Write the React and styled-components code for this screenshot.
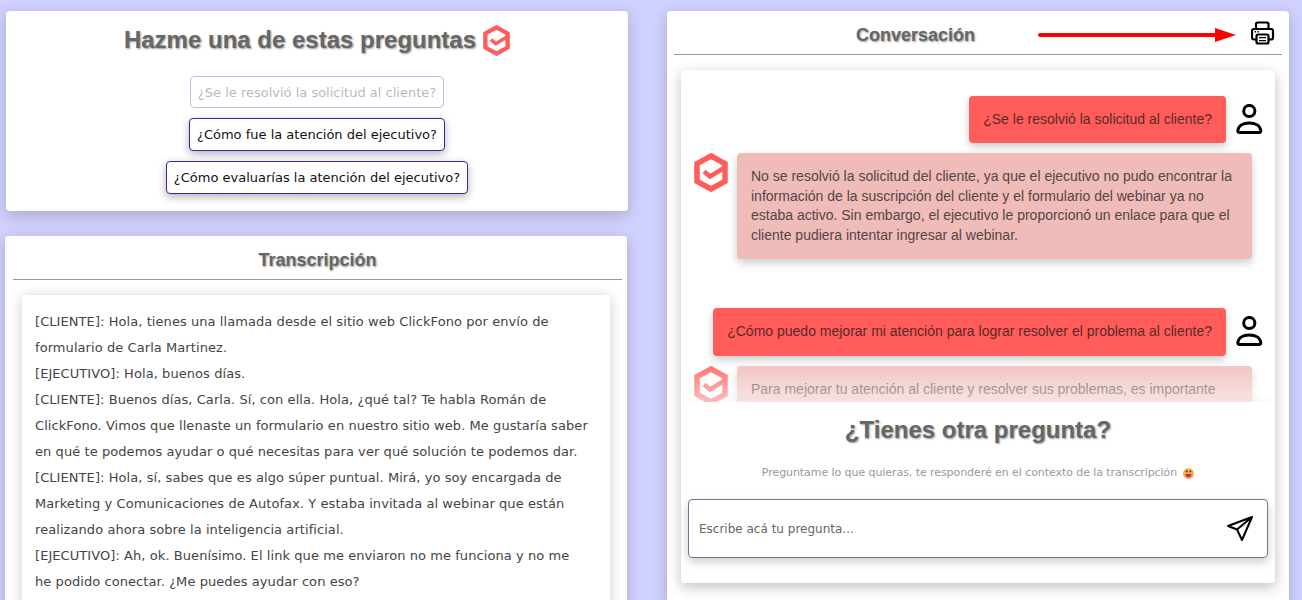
import React from "react";
import styled, { createGlobalStyle } from "styled-components";

const Global = createGlobalStyle`
  html, body { margin: 0; height: 600px; overflow: hidden; background: #d1d1ff; }
  * { box-sizing: border-box; }
`;

const Page = styled.div`
  display: grid;
  grid-template-columns: 623px 622px;
  column-gap: 39px;
  padding: 11px 0 0 5px;
  height: 600px;
  overflow: hidden;
`;
const Column = styled.div`
  display: flex;
  flex-direction: column;
  gap: 25px;
  height: 760px;
`;
const Card = styled.section`
  background: #fff;
  border-radius: 4px;
  box-shadow: 0 4px 16px rgba(0, 0, 0, 0.2);
  display: flex;
  flex-direction: column;
`;
const QuestionsCard = styled(Card)`
  height: 200px;
  width: 622px;
  margin-left: 1px;
  align-items: center;
  padding-top: 13px;
`;
const FillCard = styled(Card)`
  flex: 1;
  width: 622px;
  padding: ${(p) => (p.$left ? "0 5px 0 8px" : "0 7px")};
`;
const BigTitle = styled.h1`
  margin: 0;
  font: bold 24px/32px "Liberation Sans", Arial, sans-serif;
  color: #666;
  text-shadow: 1px 1px 2px #999;
  text-align: center;
  display: flex;
  align-items: center;
  justify-content: center;
  gap: 7px;
`;
const QuestionList = styled.div`
  display: flex;
  flex-direction: column;
  align-items: center;
  gap: 10px;
  margin-top: 20px;
`;
const Question = styled.button`
  font: 13px/17px "DejaVu Sans", sans-serif;
  padding: 7px;
  height: 33px;
  background: #fff;
  color: #111;
  border: 1px solid #4a1ea8;
  border-radius: 4px;
  box-shadow: 0 3px 9px rgba(0, 0, 0, 0.3);
  &:disabled {
    height: 32px;
    opacity: 0.3;
    box-shadow: none;
  }
`;
const Header = styled.header`
  height: 44px;
  border-bottom: 1px solid #999;
  display: flex;
  align-items: center;
  flex: none;
  padding-top: 4px;
`;
const CenteredHeader = styled(Header)`
  justify-content: center;
`;
const ConversationHeader = styled(Header)`
  padding-left: 182px;
`;
const SectionTitle = styled.h2`
  margin: 0;
  font: bold 18px/24px "Liberation Sans", Arial, sans-serif;
  color: #666;
  text-shadow: 1px 1px 2px #999;
`;
const ArrowBox = styled.svg`
  margin-left: 62px;
  flex: none;
`;
const PrinterBox = styled.svg`
  margin-left: 14px;
  margin-top: -3px;
  flex: none;
`;
const TranscriptBox = styled.div`
  margin: 15px 12px 0 9px;
  flex: 1;
  background: #fff;
  border-radius: 4px;
  box-shadow: 0 2px 14px rgba(0, 0, 0, 0.2);
  padding: 14px 21px 14px 13px;
  font: 13px/26px "DejaVu Sans", sans-serif;
  letter-spacing: 0.07px;
  color: #444;
  overflow: hidden;
`;
const ChatBox = styled.div`
  position: relative;
  margin: 15px 7px 0;
  height: 513px;
  background: #fff;
  border-radius: 4px;
  box-shadow: 0 4px 14px rgba(0, 0, 0, 0.25);
  overflow: hidden;
`;
const Messages = styled.div`
  padding: 26px 12px 0 13px;
  display: flex;
  flex-direction: column;
`;
const UserRow = styled.div`
  display: flex;
  justify-content: flex-end;
  gap: 9px;
  margin-bottom: 10px;
`;
const BotRow = styled.div`
  display: flex;
  gap: 9px;
  margin-bottom: ${(p) => p.$gap || 0}px;
  padding-right: 11px;
`;
const Bubble = styled.div`
  font: 14px/20px "Liberation Sans", Arial, sans-serif;
  border-radius: 4px;
  padding: 14px;
  box-shadow: 0 4px 8px rgba(0, 0, 0, 0.2);
`;
const UserBubble = styled(Bubble)`
  background: #ff5c5a;
  color: #5b2a2a;
  height: ${(p) => (p.$tall ? 48 : 47)}px;
  padding: 13px 14px;
`;
const BotBubble = styled(Bubble)`
  background: #efbcb9;
  color: #554545;
  flex: 1;
  min-height: 106px;
  padding: 14px;
  line-height: 19.6px;
`;
const AskPanel = styled.div`
  position: absolute;
  left: 0;
  right: 0;
  bottom: 0;
  height: 181px;
  background: #fff;
  box-shadow: 0 -2px 8px rgba(0, 0, 0, 0.06);
  padding: 12px 7px 0;
  text-align: center;
  &::before {
    content: "";
    position: absolute;
    left: 0;
    right: 0;
    top: -38px;
    height: 38px;
    background: linear-gradient(rgba(255, 255, 255, 0.12), rgba(255, 255, 255, 0.6));
  }
`;
const Hint = styled.p`
  margin: 19px 0 0;
  font: 11px/16px "DejaVu Sans", sans-serif;
  letter-spacing: -0.07px;
  color: #999;
  display: flex;
  align-items: center;
  justify-content: center;
  gap: 6px;
`;
const InputBar = styled.div`
  height: 59px;
  margin-top: 18px;
  border: 1px solid #6b7a90;
  border-radius: 4px;
  box-shadow: 0 4px 10px rgba(0, 0, 0, 0.2);
  display: flex;
  align-items: center;
  justify-content: space-between;
  padding: 0 14px 0 10px;
`;
const Placeholder = styled.span`
  font: 12px/16px "DejaVu Sans", sans-serif;
  color: #666;
`;

const Logo = ({ w = 34, h = 39 }) => (
  <svg width={w} height={h} viewBox="0 0 34 39" style={{ flex: "none" }}>
    <path d="M17 3 L31 10.6 V28.4 L17 36 L3 28.4 V10.6 Z" fill="none" stroke="#ff5c5a" strokeWidth="5.5" />
    <path d="M10 18.5 L16 23.5 L30 15" fill="none" stroke="#ff5c5a" strokeWidth="4.5" />
  </svg>
);
const Person = () => (
  <svg width="28" height="30" viewBox="0 0 28 30" fill="none" stroke="#000" strokeWidth="3" style={{ flex: "none", marginTop: 8 }}>
    <circle cx="14.3" cy="7" r="5.6" />
    <path d="M2.8 26.6 C3.4 22 8 19 14.3 19 C20.6 19 25.2 22 25.8 26.6 Q25.9 28.4 24.2 28.4 H4.4 Q2.7 28.4 2.8 26.6 Z" />
  </svg>
);
const Printer = () => (
  <PrinterBox width="24" height="24" viewBox="0 0 24 24" fill="none" stroke="#000" strokeWidth="2.2">
    <path d="M5 8 V3 Q5 1.5 6.5 1.5 H16 Q17.5 1.5 17.5 3 V8" />
    <path d="M5 18.5 H3 Q1 18.5 1 16.5 V10 Q1 8 3 8 H20 Q22 8 22 10 V16.5 Q22 18.5 20 18.5 H18" />
    <rect x="5.5" y="13.5" width="12" height="9" rx="1.5" />
    <path d="M8 16.6 H15 M8 19.6 H15" strokeWidth="1.4" />
    <path d="M3.6 10.8 H5 M6.4 10.8 H7.8" strokeWidth="1.6" />
  </PrinterBox>
);
const Arrow = () => (
  <ArrowBox width="200" height="16" viewBox="0 0 200 16">
    <path d="M3 8 H180" stroke="#f00" strokeWidth="4" strokeLinecap="round" />
    <path d="M178 1 L199 8 L178 15 Z" fill="#f00" />
  </ArrowBox>
);
const SendIcon = () => (
  <svg width="26" height="26" viewBox="0 0 26 26" fill="none" stroke="#000" strokeWidth="2" strokeLinejoin="round">
    <path d="M25 1 L1 10 L10 13.5 L15 24 Z M25 1 L10 13.5" />
  </svg>
);
const Smile = () => (
  <svg width="11" height="11" viewBox="0 0 11 11">
    <circle cx="5.5" cy="5.5" r="5.5" fill="#f7b23b" />
    <circle cx="3.6" cy="3.4" r="0.9" fill="#333" />
    <circle cx="7.4" cy="3.4" r="0.9" fill="#333" />
    <path d="M2.4 6 H8.6 Q8.2 9.2 5.5 9.2 Q2.8 9.2 2.4 6 Z" fill="#b5279a" />
  </svg>
);

const questions = [
  "¿Se le resolvió la solicitud al cliente?",
  "¿Cómo fue la atención del ejecutivo?",
  "¿Cómo evaluarías la atención del ejecutivo?",
];
const transcript = [
  "[CLIENTE]: Hola, tienes una llamada desde el sitio web ClickFono por envío de formulario de Carla Martinez.",
  "[EJECUTIVO]: Hola, buenos días.",
  "[CLIENTE]: Buenos días, Carla. Sí, con ella. Hola, ¿qué tal? Te habla Román de ClickFono. Vimos que llenaste un formulario en nuestro sitio web. Me gustaría saber en qué te podemos ayudar o qué necesitas para ver qué solución te podemos dar.",
  "[CLIENTE]: Hola, sí, sabes que es algo súper puntual. Mirá, yo soy encargada de Marketing y Comunicaciones de Autofax. Y estaba invitada al webinar que están realizando ahora sobre la inteligencia artificial.",
  "[EJECUTIVO]: Ah, ok. Buenísimo. El link que me enviaron no me funciona y no me he podido conectar. ¿Me puedes ayudar con eso?",
];

export default function App() {
  return (
    <>
      <Global />
      <Page>
        <Column>
          <QuestionsCard>
            <BigTitle>
              Hazme una de estas preguntas
              <Logo w={27} h={31} />
            </BigTitle>
            <QuestionList>
              {questions.map((q, i) => (
                <Question key={q} disabled={i === 0}>{q}</Question>
              ))}
            </QuestionList>
          </QuestionsCard>
          <FillCard $left>
            <CenteredHeader>
              <SectionTitle>Transcripción</SectionTitle>
            </CenteredHeader>
            <TranscriptBox>
              {transcript.map((t) => (
                <div key={t}>{t}</div>
              ))}
            </TranscriptBox>
          </FillCard>
        </Column>
        <Column>
          <FillCard>
            <ConversationHeader>
              <SectionTitle>Conversación</SectionTitle>
              <Arrow />
              <Printer />
            </ConversationHeader>
            <ChatBox>
              <Messages>
                <UserRow>
                  <UserBubble>¿Se le resolvió la solicitud al cliente?</UserBubble>
                  <Person />
                </UserRow>
                <BotRow $gap={49}>
                  <Logo />
                  <BotBubble>
                    No se resolvió la solicitud del cliente, ya que el ejecutivo no pudo encontrar la información de la suscripción del cliente y el formulario del webinar ya no estaba activo. Sin embargo, el ejecutivo le proporcionó un enlace para que el cliente pudiera intentar ingresar al webinar.
                  </BotBubble>
                </BotRow>
                <UserRow>
                  <UserBubble $tall>¿Cómo puedo mejorar mi atención para lograr resolver el problema al cliente?</UserBubble>
                  <Person />
                </UserRow>
                <BotRow>
                  <Logo />
                  <BotBubble>
                    Para mejorar tu atención al cliente y resolver sus problemas, es importante
                  </BotBubble>
                </BotRow>
              </Messages>
              <AskPanel>
                <BigTitle>¿Tienes otra pregunta?</BigTitle>
                <Hint>
                  Preguntame lo que quieras, te responderé en el contexto de la transcripción
                  <Smile />
                </Hint>
                <InputBar>
                  <Placeholder>Escribe acá tu pregunta...</Placeholder>
                  <SendIcon />
                </InputBar>
              </AskPanel>
            </ChatBox>
          </FillCard>
        </Column>
      </Page>
    </>
  );
}
